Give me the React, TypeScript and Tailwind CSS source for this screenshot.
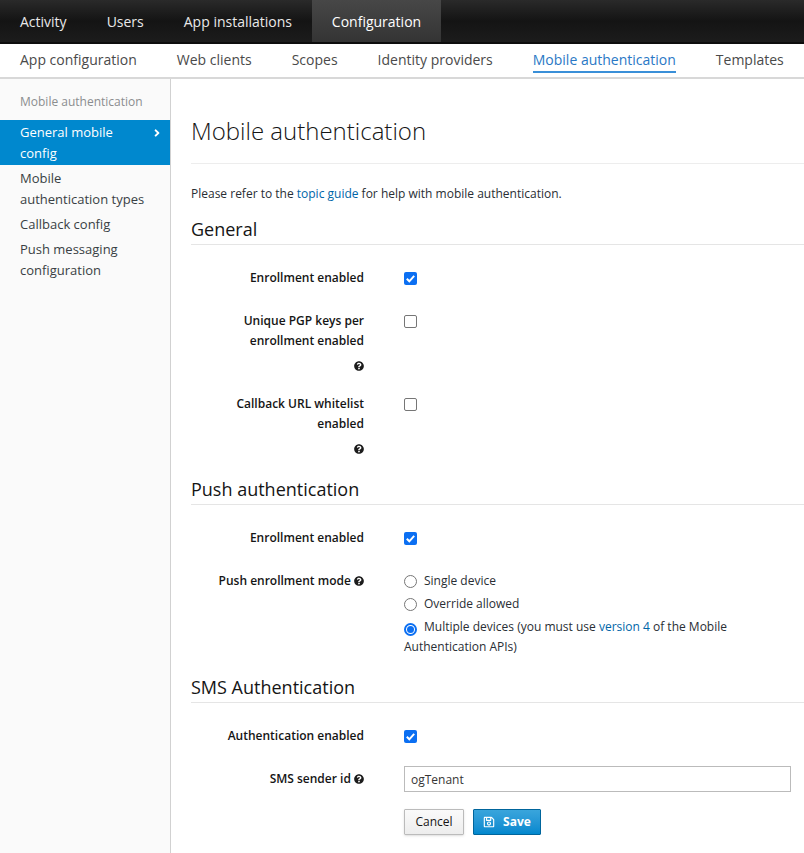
import type { ReactNode } from "react"
import { FaAngleRight, FaQuestionCircle, FaRegSave } from "react-icons/fa"

const font = { fontFamily: '"Open Sans", sans-serif' }

function Help() {
  return <FaQuestionCircle className="inline-block h-[10px] w-[10px] align-[-0.5px] text-[#1c1c1c]" />
}

function Check({ on }: { on?: boolean }) {
  if (!on) return <span className="block h-[13px] w-[13px] rounded-[2px] border border-[#767676] bg-white" />
  return (
    <span className="flex h-[13px] w-[13px] items-center justify-center rounded-[2px] bg-[#0b6ff2]">
      <svg viewBox="0 0 13 13" className="h-[13px] w-[13px]">
        <path d="M2.800 6.800l2.500 2.500 4.900-5.400" fill="none" stroke="#fff" strokeWidth="2" />
      </svg>
    </span>
  )
}

function Radio({ on }: { on?: boolean }) {
  if (!on) return <span className="block h-[13px] w-[13px] shrink-0 rounded-full border border-[#767676] bg-white" />
  return (
    <span className="flex h-[13px] w-[13px] shrink-0 items-center justify-center rounded-full border-2 border-[#0b6ff2] bg-white">
      <span className="block h-[7px] w-[7px] rounded-full bg-[#0b6ff2]" />
    </span>
  )
}

function Section({ title, top, children }: { title: string; top: string; children: ReactNode }) {
  return (
    <section className={top}>
      <h2 className="h-[28px] border-b border-[#e5e5e5] text-[18px] leading-[24px] text-[#151515]">{title}</h2>
      {children}
    </section>
  )
}

function Row({ label, className, children }: { label: ReactNode; className: string; children: ReactNode }) {
  return (
    <div className={`flex ${className}`}>
      <div className="w-[173px] text-right text-[12px] leading-[20px] font-semibold text-[#151515]">{label}</div>
      <div className="ml-[40px] min-w-0 flex-1">{children}</div>
    </div>
  )
}

export default function App() {
  return (
    <div className="flex h-[853px] w-[804px] flex-col overflow-hidden bg-white" style={font}>
      <div className="flex h-[44px] border-b-2 border-[#0d0d0d] bg-gradient-to-b from-[#2a2a2a] via-[#141414] to-[#1c1c1c] text-[14px] leading-[43px] text-[#e9e9e9]">
        <a className="ml-[20px]">Activity</a>
        <a className="ml-[40px]">Users</a>
        <a className="ml-[40px]">App installations</a>
        <a className="ml-[20px] w-[129px] bg-gradient-to-b from-[#474747] to-[#343434] text-center text-white">Configuration</a>
      </div>

      <div className="flex h-[35px] shrink-0 gap-[40px] border-b-2 border-[#d8d8d8] pl-[20px] text-[14px] leading-[31px] text-[#4a4a4a]">
        <a>App configuration</a>
        <a>Web clients</a>
        <a>Scopes</a>
        <a>Identity providers</a>
        <a className="h-[29px] border-b-2 border-[#398fd8] text-[#2a78c5]">Mobile authentication</a>
        <a>Templates</a>
      </div>

      <div className="flex min-h-0 flex-1">
        <aside className="w-[171px] shrink-0 border-r border-[#d1d1d1] bg-[#fafafa] pt-[13px] text-[13px] leading-[21px] text-[#393f44]">
          <div className="mb-[8px] pl-[20px] text-[12px] leading-[20px] text-[#8b8d8f]">Mobile authentication</div>
          <div className="flex w-[170px] items-start justify-between bg-[#0088ce] py-[1.500px] pr-[7px] pl-[20px] font-medium text-white">
            <span className="w-[110px]">General mobile config</span>
            <FaAngleRight className="mt-[5px] h-[12px] w-[12px]" />
          </div>
          <div className="w-[150px] pt-[3px] pl-[20px]">Mobile authentication types</div>
          <div className="mt-[4px] pl-[20px]">Callback config</div>
          <div className="mt-[4px] w-[150px] pl-[20px]">Push messaging configuration</div>
        </aside>

        <main className="min-w-0 flex-1 pl-[20px] text-[12px] text-[#151515]">
          <h1 className="h-[85px] border-b border-[#ededed] pt-[34px] text-[24px] leading-[36px] font-light text-[#151515]">
            Mobile authentication
          </h1>
          <p className="mt-[20px] leading-[20px] text-[#292e34]">
            Please refer to the <a className="text-[#0066a8]">topic guide</a> for help with mobile authentication.
          </p>

          <Section title="General" top="mt-[13px]">
            <Row label="Enrollment enabled" className="mt-[23px]">
              <div className="pt-[4px]"><Check on /></div>
            </Row>
            <Row label={<>Unique PGP keys per<br />enrollment enabled<div className="mt-[5px]"><Help /></div></>} className="mt-[23px]">
              <div className="pt-[4px]"><Check /></div>
            </Row>
            <Row label={<>Callback URL whitelist<br />enabled<div className="mt-[5px]"><Help /></div></>} className="mt-[18px]">
              <div className="pt-[4px]"><Check /></div>
            </Row>
          </Section>

          <Section title="Push authentication" top="mt-[18px]">
            <Row label="Enrollment enabled" className="mt-[23px]">
              <div className="pt-[4px]"><Check on /></div>
            </Row>
            <Row label={<>Push enrollment mode <Help /></>} className="mt-[23px] pr-[13px]">
              <div className="text-[12px] leading-[20px] text-[#292e34]">
                <div className="flex items-center gap-[7px]"><Radio /> Single device</div>
                <div className="mt-[3px] flex items-center gap-[7px]"><Radio /> Override allowed</div>
                <div className="mt-[3px]">
                  <span className="mr-[7px] inline-block align-[-2px]"><Radio on /></span>
                  Multiple devices (you must use <a className="text-[#0066a8]">version 4</a> of the Mobile Authentication APIs)
                </div>
              </div>
            </Row>
          </Section>

          <Section title="SMS Authentication" top="mt-[18px]">
            <Row label="Authentication enabled" className="mt-[23px]">
              <div className="pt-[4px]"><Check on /></div>
            </Row>
            <Row label={<>SMS sender id <Help /></>} className="mt-[23px] pr-[13px]">
              <div className="-mt-[3px] h-[26px] border border-[#bbbbbb] pl-[6px] text-[12px] leading-[25px] text-[#363636]">ogTenant</div>
              <div className="mt-[17px] flex gap-[9px]">
                <button className="h-[26px] w-[60px] rounded-[1px] border border-[#bbbbbb] bg-gradient-to-b from-[#fafafa] to-[#ededed] text-[12px] text-[#151515] shadow-sm">Cancel</button>
                <button className="flex h-[26px] w-[68px] items-center justify-center gap-[8px] rounded-[1px] border border-[#00659c] bg-gradient-to-b from-[#39a5dc] to-[#0088ce] text-[12px] font-bold text-white">
                  <FaRegSave className="h-[12px] w-[12px]" /> Save
                </button>
              </div>
            </Row>
          </Section>
        </main>
      </div>
    </div>
  )
}
